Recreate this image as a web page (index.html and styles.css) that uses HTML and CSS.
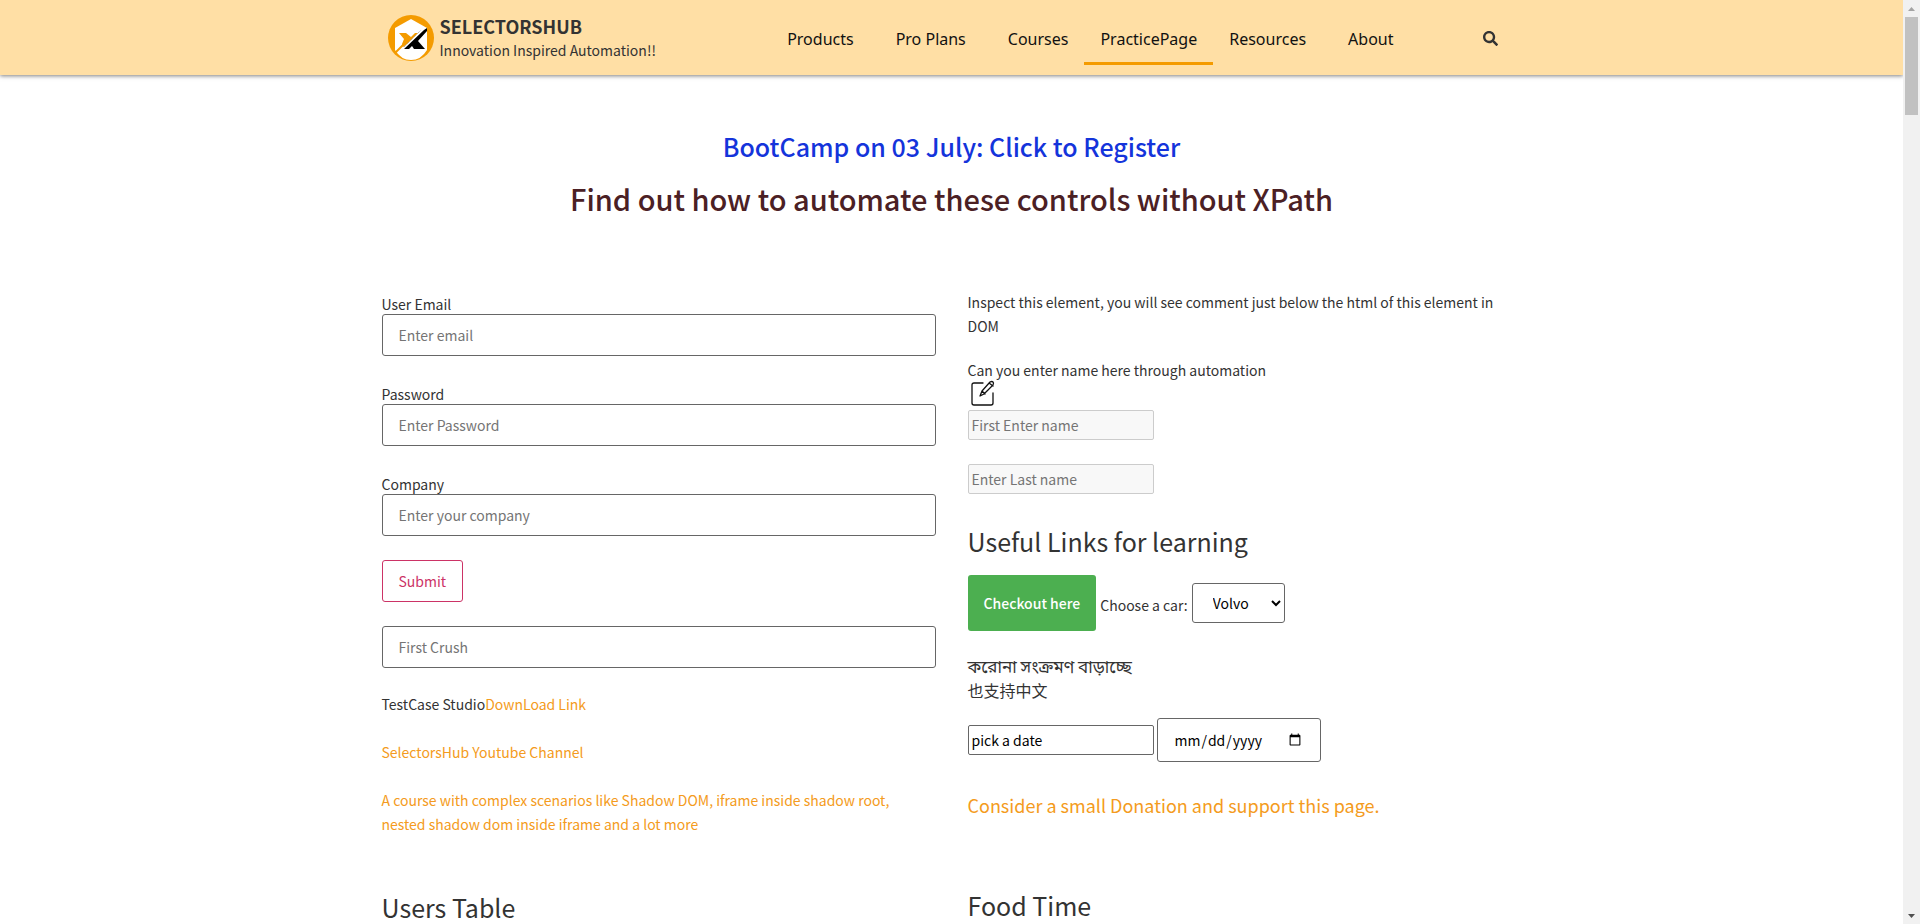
FILE: index.html
```html
<!DOCTYPE html>
<html lang="en">
<head>
<meta charset="utf-8">
<title>SelectorsHub Practice Page</title>
<link rel="stylesheet" href="styles.css">
</head>
<body>
<div class="window">
  <div class="page">
    <header class="site-header">
      <div class="container header-row">
        <a class="brand" href="#">
          <svg class="brand-logo" viewBox="0 0 46 46" aria-hidden="true">
            <circle cx="23" cy="23" r="23" fill="#f49b00"/>
            <path d="M23 4 39 13V35Q33 45 23 45T7 35V13Z" fill="#fff"/>
            <path d="M11 18h7l5 4 4-4h3L19 29l-4 3-1-3 2-5Z" fill="#f49b00"/>
            <path d="M7 38 20 25" stroke="#f49b00" stroke-width="2"/>
            <path d="M16 32 33 15" stroke="#999" stroke-width="1" stroke-dasharray="1 1"/>
            <path d="M39 13v3L30 26l7 8H26l-2-3-3 3h-5L36 15Z" fill="#000"/>
          </svg>
          <span class="brand-text">
            <strong class="brand-name">SELECTORSHUB</strong>
            <span class="brand-tagline">Innovation Inspired Automation!!</span>
          </span>
        </a>
        <nav class="nav">
          <a class="nav-link has-menu" href="#">Products</a>
          <a class="nav-link has-menu" href="#">Pro Plans</a>
          <a class="nav-link" href="#">Courses</a>
          <a class="nav-link active" href="#">PracticePage</a>
          <a class="nav-link has-menu" href="#">Resources</a>
          <a class="nav-link" href="#">About</a>
        </nav>
        <button class="search" type="button" aria-label="Search">
          <svg viewBox="0 0 512 512" aria-hidden="true"><path fill="#333" d="M505 442.700 405.300 343c-4.500-4.500-10.600-7-17-7H372c27.600-35.300 44-79.700 44-128C416 93.100 322.900 0 208 0S0 93.100 0 208s93.100 208 208 208c48.300 0 92.700-16.400 128-44v16.300c0 6.400 2.500 12.500 7 17l99.700 99.700c9.400 9.400 24.600 9.400 33.900 0l28.300-28.300c9.400-9.400 9.400-24.600.1-34zM208 336c-70.700 0-128-57.200-128-128 0-70.700 57.200-128 128-128 70.700 0 128 57.200 128 128 0 70.700-57.200 128-128 128z"/></svg>
        </button>
      </div>
    </header>

    <main class="container">
      <div class="intro">
        <h2 class="bootcamp"><a href="#">BootCamp on 03 July: Click to Register</a></h2>
        <h1 class="headline">Find out how to automate these controls without XPath</h1>
      </div>

      <div class="columns">
        <section class="column column-left">
          <form class="form">
            <div class="field"><label for="email">User Email</label><input class="input" id="email" type="email" placeholder="Enter email"></div>
            <div class="field"><label for="password">Password</label><input class="input" id="password" type="password" placeholder="Enter Password"></div>
            <div class="field"><label for="company">Company</label><input class="input" id="company" type="text" placeholder="Enter your company"></div>
            <button class="submit" type="button">Submit</button>
            <input class="input" type="text" placeholder="First Crush" aria-label="First Crush">
          </form>
          <div class="links">
            <p>TestCase Studio<a href="#">DownLoad Link</a></p>
            <p><a href="#">SelectorsHub Youtube Channel</a></p>
            <p><a href="#">A course with complex scenarios like Shadow DOM, iframe inside shadow root, nested shadow dom inside iframe and a lot more</a></p>
          </div>
          <h3 class="subhead">Users Table</h3>
        </section>

        <section class="column column-right">
          <p class="note">Inspect this element, you will see comment just below the html of this element in DOM</p>
          <div class="names">
            <label for="first">Can you enter name here through automation</label>
            <svg class="edit-icon" viewBox="0 0 24 26" fill="none" stroke="#111" stroke-width="1.300" stroke-linecap="round" stroke-linejoin="round" aria-hidden="true"><path d="M12 3H3Q1 3 1 5v18q0 2 2 2h17q2 0 2-2V13"/><path d="m9 16 2-5 8-9q2-1 3 0t0 3l-9 9ZM18 3l4 3M11 11l3 3"/></svg>
            <input class="plain disabled" id="first" type="text" placeholder="First Enter name" disabled>
            <input class="plain disabled" type="text" placeholder="Enter Last name" aria-label="Last name" disabled>
          </div>
          <h3 class="subhead">Useful Links for learning</h3>
          <div class="car-row">
            <button class="checkout" type="button">Checkout here</button>
            <label for="cars">Choose a car:</label>
            <select class="cars" id="cars"><option>Volvo</option><option>Saab</option><option>Opel</option><option>Audi</option></select>
          </div>
          <div class="scripts"><div class="bengali" lang="bn">করোনা সংক্রমণ বাড়াচ্ছে</div><div lang="zh">也支持中文</div></div>
          <div class="date-row">
            <input class="plain" type="text" value="pick a date" aria-label="Pick a date">
            <input class="date" type="date" aria-label="Date">
          </div>
          <p class="donation"><a href="#">Consider a small Donation and support this page.</a></p>
          <h3 class="subhead">Food Time</h3>
        </section>
      </div>
    </main>
  </div>
  <div class="scrollbar" aria-hidden="true">
    <svg class="arrow" viewBox="0 0 17 17"><path d="M5 11h7L8.500 7Z" fill="#a3a3a3"/></svg>
    <div class="thumb"></div>
    <svg class="arrow" viewBox="0 0 17 17"><path d="M5 7h7L8.500 11Z" fill="#505050"/></svg>
  </div>
</div>
</body>
</html>
```
FILE: styles.css
```css
* { box-sizing: border-box; }

body {
  margin: 0;
  background: #fff;
  color: #333;
  font: 14px/24px "Noto Sans CJK SC", "Noto Sans Bengali", sans-serif;
}

h1, h2, h3, p { margin: 0; }
a { color: #f49b20; text-decoration: none; }
input, button, select { font: inherit; }
::placeholder { color: #757575; opacity: 1; }

.window { display: flex; height: 100vh; }
.page { flex: 1; min-width: 0; overflow: hidden; }
.container { max-width: 1140px; margin: 0 auto; }

.site-header {
  background: #ffdfa5;
  box-shadow: 0 1px 4px rgba(0, 0, 0, .5);
}
.header-row { display: flex; align-items: center; height: 75px; }
.brand { display: flex; align-items: center; gap: 6px; margin-left: 6px; color: #333; }
.brand-logo { width: 46px; height: 46px; }
.brand-text { display: flex; flex-direction: column; }
.brand-name { font-size: 18px; font-weight: 700; }
.brand-tagline { line-height: 24px; }
.nav { display: flex; margin-left: auto; }
.nav-link {
  padding: 17px 16px 11px;
  border-bottom: 3px solid transparent;
  color: #111;
  font-family: "Noto Sans", sans-serif;
  font-size: 16px;
  white-space: nowrap;
}
.nav-link.has-menu { margin-right: 10px; }
.nav-link.active { border-color: #f49b00; }
.search { display: flex; margin: 0 24px 0 73px; padding: 2px 0 0; border: 0; background: none; }
.search svg { width: 15px; height: 15px; }

.intro { padding-top: 54px; text-align: center; }
.bootcamp { font-size: 25px; font-weight: 500; line-height: 34px; }
.bootcamp a { color: #1434db; }
.headline { margin-top: 16px; color: #4b2024; font-size: 29px; font-weight: 500; line-height: 38px; }

.columns { display: grid; grid-template-columns: 1fr 1fr; gap: 32px; margin-top: 73px; }
.form { display: flex; flex-direction: column; align-items: flex-start; gap: 24px; }
.field { width: 100%; }
.field label { display: block; padding-top: 4px; line-height: 20px; }
.input {
  display: block;
  width: 100%;
  height: 42px;
  padding: 8px 16px;
  border: 1px solid #666;
  border-radius: 3px;
}
.submit {
  height: 42px;
  padding: 8px 16px;
  border: 1px solid #cc3366;
  border-radius: 3px;
  background: #fff;
  color: #cc3366;
}
.links { display: grid; gap: 24px; margin: 24px 0 54px; padding-right: 16px; }
.subhead { font-size: 25px; font-weight: 400; line-height: 34px; }

.names { display: flex; flex-direction: column; align-items: flex-start; margin: 20px 0 30px; }
.edit-icon { width: 24px; height: 26px; margin: -2px 0 4px 3px; }
.plain { width: 186px; height: 30px; padding: 1px 3px; border: 1px solid #666; border-radius: 2px; }
.disabled { border-color: #ccc; background: #f8f8f8; }
.disabled + .disabled { margin-top: 24px; }
.car-row { display: flex; align-items: center; gap: 4px; margin-top: 17px; }
.car-row label { padding-top: 4px; }
.checkout { height: 56px; padding: 8px 16px; border: 0; border-radius: 3px; background: #4caf50; color: #fff; font-weight: 500; }
.cars { width: 93px; height: 40px; padding: 0 16px; border: 1px solid #666; border-radius: 3px; background: #fff; }
.scripts { margin: 23px 0 16px; font-size: 16px; }
.bengali { font-size: 17px; }
.date-row { display: flex; align-items: center; gap: 3px; }
.date { width: 164px; height: 44px; padding: 8px 16px; border: 1px solid #666; border-radius: 3px; }
.donation { margin: 31px 0 71px; font-size: 18px; }

.scrollbar { display: flex; flex-direction: column; flex: 0 0 17px; background: #f1f1f1; }
.arrow { width: 17px; height: 17px; }
.thumb { flex: 0 0 98px; margin: 0 2px auto; background: #c1c1c1; }
```
